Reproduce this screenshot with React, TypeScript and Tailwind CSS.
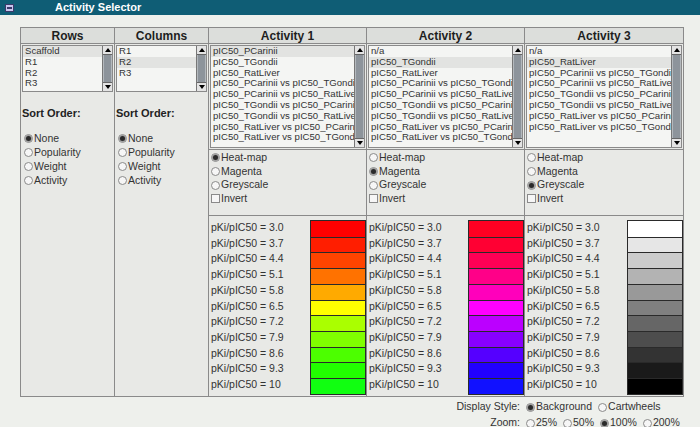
import React from 'react';

const levels = ['3.0', '3.7', '4.4', '5.1', '5.8', '6.5', '7.2', '7.9', '8.6', '9.3', '10'];

const heatColors = ['#ff0000', '#ff1e00', '#ff4400', '#ff7200', '#ffaa00', '#ffff00', '#aaff00', '#80ff00', '#4cff00', '#22ff00', '#11ff11'];
const magentaColors = ['#ff0022', '#ff0033', '#ff0055', '#ff0088', '#ff00bb', '#ff00ff', '#bb00ff', '#8800ff', '#5500ff', '#2200ff', '#1111ff'];
const greyColors = ['#ffffff', '#e6e6e6', '#cccccc', '#b3b3b3', '#999999', '#808080', '#666666', '#4d4d4d', '#333333', '#1a1a1a', '#000000'];

const vsItems = [
  'pIC50_PCarinii vs pIC50_TGondii',
  'pIC50_PCarinii vs pIC50_RatLiver',
  'pIC50_TGondii vs pIC50_PCarinii',
  'pIC50_TGondii vs pIC50_RatLiver',
  'pIC50_RatLiver vs pIC50_PCarinii',
  'pIC50_RatLiver vs pIC50_TGondii',
];

const activities = [
  {
    title: 'Activity 1',
    items: ['pIC50_PCarinii', 'pIC50_TGondii', 'pIC50_RatLiver', ...vsItems],
    selected: 0,
    scheme: 0,
    colors: heatColors,
  },
  {
    title: 'Activity 2',
    items: ['n/a', 'pIC50_TGondii', 'pIC50_RatLiver', ...vsItems],
    selected: 1,
    scheme: 1,
    colors: magentaColors,
  },
  {
    title: 'Activity 3',
    items: ['n/a', 'pIC50_RatLiver', ...vsItems],
    selected: 1,
    scheme: 2,
    colors: greyColors,
  },
];

const Radio = ({ checked }: { checked?: boolean }) => (
  <span className="flex items-center justify-center w-[9px] h-[9px] rounded-full border border-[#8a8a8a] bg-[#f6f6f6] shrink-0 mr-[1px]">
    {checked && <span className="w-[5px] h-[5px] rounded-full bg-[#2a2a2a] ring-1 ring-[#9a9a9a]" />}
  </span>
);

const Check = () => (
  <span className="w-[9px] h-[9px] border border-[#8a8a8a] bg-[#f6f6f6] shrink-0 mr-[1px]" />
);

const ScrollBar = () => (
  <div className="flex flex-col w-[10px] h-full border-l border-[#777] shrink-0">
    <div className="flex items-center justify-center h-[9px] bg-[#e4e4e4] border-b border-[#666]">
      <div className="w-0 h-0 border-x-[3px] border-x-transparent border-b-[4px] border-b-black" />
    </div>
    <div className="flex-1 bg-[#8d949b] border-x border-[#b4b9bd]" />
    <div className="flex items-center justify-center h-[9px] bg-[#e4e4e4] border-t border-[#666]">
      <div className="w-0 h-0 border-x-[3px] border-x-transparent border-t-[4px] border-t-black" />
    </div>
  </div>
);

const ListBox = ({ items, selected, height }: { items: string[]; selected: number; height: string }) => (
  <div className={`flex ${height} border border-[#8a8a8a] bg-[#f4f5f3]`}>
    <div className="flex-1 min-w-0 overflow-hidden">
      {items.map((item, i) => (
        <div
          key={item + i}
          className={`h-[10.8px] leading-[10.8px] pl-[2px] text-[9.6px] whitespace-nowrap overflow-hidden ${
            i === selected ? 'bg-[#e2e3e1]' : ''
          }`}
        >
          {item}
        </div>
      ))}
    </div>
    <ScrollBar />
  </div>
);

const Header = ({ title }: { title: string }) => (
  <div className="h-[16px] flex items-center justify-center border-b border-[#8a8a8a] bg-[#dcdedb] text-[12px] font-bold text-[#1e1e1e]">
    {title}
  </div>
);

const SideColumn = ({ title, items, selected }: { title: string; items: string[]; selected: number }) => (
  <div className="w-[94px] border-r border-[#8a8a8a] flex flex-col">
    <Header title={title} />
    <div className="px-[1px] pt-[1px]">
      <ListBox items={items} selected={selected} height="h-[47px]" />
    </div>
    <div className="pl-[1px] mt-[13px] text-[11px] font-bold text-[#222]">Sort Order:</div>
    <div className="mt-[10px] pl-[3px] text-[10.5px]">
      {['None', 'Popularity', 'Weight', 'Activity'].map((o, i) => (
        <div key={o} className="flex items-center h-[14px]">
          <Radio checked={i === 0} />
          {o}
        </div>
      ))}
    </div>
  </div>
);

const ActivityColumn = ({ a, last }: { a: (typeof activities)[number]; last?: boolean }) => (
  <div className={`w-[158px] flex flex-col ${last ? '' : 'border-r border-[#8a8a8a]'}`}>
    <Header title={a.title} />
    <div className="h-[106px] px-[1px] pt-[1px] border-b border-[#8a8a8a]">
      <ListBox items={a.items} selected={a.selected} height="h-[103px]" />
    </div>
    <div className="h-[66px] pt-[1px] pl-[2px] border-b border-[#8a8a8a] text-[10.5px]">
      {['Heat-map', 'Magenta', 'Greyscale'].map((s, i) => (
        <div key={s} className="flex items-center h-[13.7px]">
          <Radio checked={i === a.scheme} />
          {s}
        </div>
      ))}
      <div className="flex items-center h-[13.7px]">
        <Check />
        Invert
      </div>
    </div>
    <div className="flex pt-[4px] pl-[2px]">
      <div className="flex-1 text-[10.5px]">
        {levels.map(l => (
          <div key={l} className="h-[15.73px] flex items-center">
            pKi/pIC50 = {l}
          </div>
        ))}
      </div>
      <div className="w-[56px] border border-[#2a2a2a]">
        {a.colors.map((c, i) => (
          <div
            key={c + i}
            className={`h-[15.73px] ${i > 0 ? 'border-t border-[#2a2a2a]' : ''}`}
            style={{ backgroundColor: c }}
          />
        ))}
      </div>
    </div>
  </div>
);

const App: React.FC = () => {
  return (
    <div className="w-[700px] h-[427px] overflow-hidden bg-[#eef0ec] text-[#333] font-['Liberation_Sans',Arial,sans-serif]">
      {/* Title bar */}
      <div className="h-[15px] bg-[#0f5d75] flex items-center">
        <svg width="9" height="8" viewBox="0 0 9 8" className="ml-[5px]">
          <rect x="0.5" y="0.5" width="8" height="7" fill="#c9c6ee" stroke="#3a3a6a" />
          <rect x="2" y="3" width="5" height="2" fill="#3a3a6a" />
        </svg>
        <span className="ml-[41px] text-[11px] font-bold text-white">Activity Selector</span>
      </div>

      <div className="pl-[20px] pt-[12px]">
        {/* Table */}
        <div className="flex w-[664px] h-[370px] border border-[#8a8a8a] bg-[#e8e9e6]">
          <SideColumn title="Rows" items={['Scaffold', 'R1', 'R2', 'R3']} selected={0} />
          <SideColumn title="Columns" items={['R1', 'R2', 'R3']} selected={1} />
          {activities.map((a, i) => (
            <ActivityColumn key={a.title} a={a} last={i === activities.length - 1} />
          ))}
        </div>

        {/* Display options */}
        <div className="grid grid-cols-[500px_auto] gap-x-[6px] mt-[2px] text-[10.5px]">
          <div className="h-[16px] flex items-center justify-end">Display Style:</div>
          <div className="h-[16px] flex items-center gap-[6px]">
            <span className="flex items-center"><Radio checked />Background</span>
            <span className="flex items-center"><Radio />Cartwheels</span>
          </div>
          <div className="h-[16px] flex items-center justify-end">Zoom:</div>
          <div className="h-[16px] flex items-center gap-[6px]">
            <span className="flex items-center"><Radio />25%</span>
            <span className="flex items-center"><Radio />50%</span>
            <span className="flex items-center"><Radio checked />100%</span>
            <span className="flex items-center"><Radio />200%</span>
          </div>
        </div>
      </div>
    </div>
  );
};

export default App;
